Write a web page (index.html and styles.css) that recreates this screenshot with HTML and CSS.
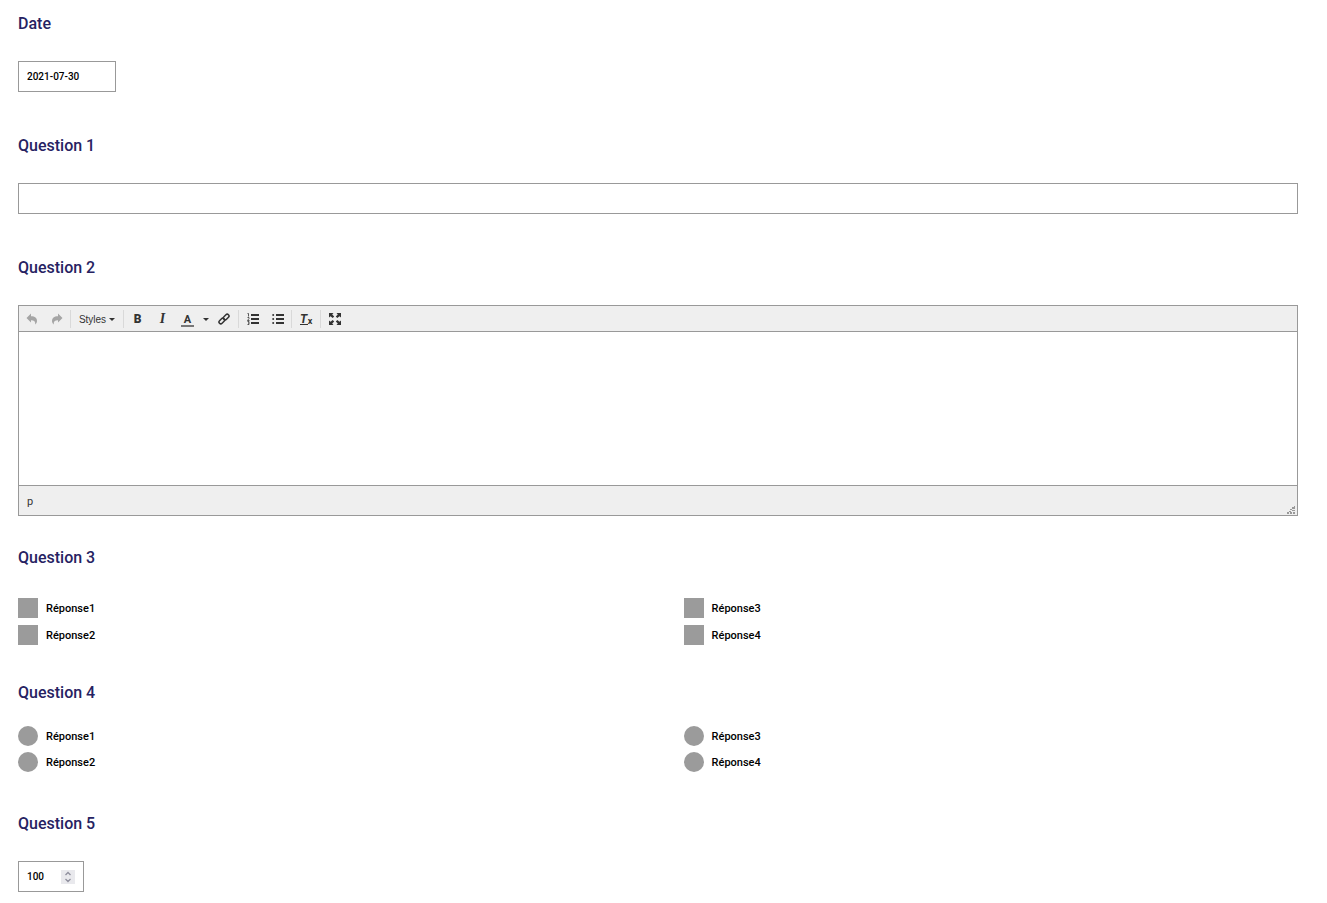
FILE: index.html
```html
<!DOCTYPE html>
<html lang="fr">
<head>
  <meta charset="UTF-8">
  <meta name="viewport" content="width=device-width, initial-scale=1.0">
  <title>Questionnaire</title>
  <link rel="stylesheet" href="styles.css">
</head>
<body>

  <form class="survey">
    <div class="question">
      <label class="title" for="date">Date</label>
      <input class="field field-date" type="text" id="date" value="2021-07-30">
    </div>

    <div class="question">
      <label class="title" for="q1">Question 1</label>
      <input class="field" type="text" id="q1">
    </div>

    <div class="question question-editor">
      <label class="title" for="q2">Question 2</label>
      <div class="editor">
        <div class="toolbar">
          <div class="group">
            <button type="button" class="off" aria-label="Annuler" disabled>
              <svg width="12" height="12" viewBox="0 0 12 12"><path d="M5 .5v2.700c4 0 6 2 6 4.800 0 1.500-.7 2.700-1.800 3.500.5-2.800-1-4.300-4.200-4.300v2.300L.5 5z"/></svg>
            </button>
            <button type="button" class="off" aria-label="Rétablir" disabled>
              <svg width="12" height="12" viewBox="0 0 12 12"><path d="M7 .5v2.700C3 3.200 1 5.200 1 8c0 1.500.7 2.700 1.800 3.500-.5-2.800 1-4.300 4.200-4.300v2.300L11.500 5z"/></svg>
            </button>
          </div>
          <div class="group">
            <button type="button" class="styles">Styles <i class="caret"></i></button>
          </div>
          <div class="group">
            <button type="button" class="bold" aria-label="Gras">B</button>
            <button type="button" class="italic" aria-label="Italique">I</button>
            <button type="button" class="color" aria-label="Couleur du texte"><span>A</span></button>
            <button type="button" class="drop" aria-label="Choisir une couleur"><i class="caret"></i></button>
            <button type="button" aria-label="Lien">
              <svg class="link" width="12" height="12" viewBox="0 0 12 12"><rect x="5" y="2.200" width="6.400" height="3.600" rx="1.800" transform="rotate(-45 8.200 4)"/><rect x=".6" y="6.200" width="6.400" height="3.600" rx="1.800" transform="rotate(-45 3.800 8)"/></svg>
            </button>
          </div>
          <div class="group">
            <button type="button" aria-label="Liste numérotée">
              <svg width="12" height="12" viewBox="0 0 12 12"><path d="M4 1h8v2H4zM4 5h8v2H4zM4 9h8v2H4z"/><path d="M.5 .5h1v3M.5 4.500H2v1L.5 7.500H2.500M.5 8.500H2v3H.5M1 10h1" fill="none" stroke="#333" stroke-width=".8"/></svg>
            </button>
            <button type="button" aria-label="Liste à puces">
              <svg width="12" height="12" viewBox="0 0 12 12"><path d="M4 1h8v2H4zM4 5h8v2H4zM4 9h8v2H4z"/><circle cx="1.200" cy="2" r="1"/><circle cx="1.200" cy="6" r="1"/><circle cx="1.200" cy="10" r="1"/></svg>
            </button>
          </div>
          <div class="group">
            <button type="button" class="clear" aria-label="Effacer la mise en forme"><span>T</span><small>x</small></button>
          </div>
          <div class="group">
            <button type="button" aria-label="Plein écran">
              <svg width="12" height="12" viewBox="0 0 12 12"><path d="M0 0h4.500L3.200 1.500 5.200 3.500 3.700 5 1.500 3.200 0 4.500zM12 0v4.500L10.500 3.200 8.300 5 6.800 3.500 8.800 1.500 7.500 0zM0 12V7.500L1.500 8.800 3.700 7 5.200 8.500 3.200 10.500 4.500 12zM12 12H7.500L8.800 10.500 6.800 8.500 8.300 7 10.500 8.800 12 7.500z"/></svg>
            </button>
          </div>
        </div>
        <textarea class="content" id="q2"></textarea>
        <div class="statusbar">
          <span>p</span>
          <svg class="resize" width="8" height="8" viewBox="0 0 8 8"><path d="M7 0h1v1H7zM5 1h3v2H5zM3 3h2v1H3zM5 4h3v1H5zM2 5h2v1H2zM0 6h2v2H0zM3 6h2v2H3zM6 6h2v2H6z"/></svg>
        </div>
      </div>
    </div>

    <fieldset class="question question-checks">
      <legend class="title">Question 3</legend>
      <div class="answers">
        <label><input type="checkbox" name="q3" value="1">Réponse1</label>
        <label><input type="checkbox" name="q3" value="2">Réponse2</label>
        <label><input type="checkbox" name="q3" value="3">Réponse3</label>
        <label><input type="checkbox" name="q3" value="4">Réponse4</label>
      </div>
    </fieldset>

    <fieldset class="question question-radios">
      <legend class="title">Question 4</legend>
      <div class="answers">
        <label><input type="radio" name="q4" value="1">Réponse1</label>
        <label><input type="radio" name="q4" value="2">Réponse2</label>
        <label><input type="radio" name="q4" value="3">Réponse3</label>
        <label><input type="radio" name="q4" value="4">Réponse4</label>
      </div>
    </fieldset>

    <div class="question">
      <label class="title" for="q5">Question 5</label>
      <div class="field number">
        <input type="number" id="q5" value="100">
        <div class="spinner">
          <button type="button" aria-label="Augmenter" onclick="document.getElementById('q5').stepUp()">
            <svg width="8" height="5" viewBox="0 0 8 5"><path d="M1.500 4L4 1.500 6.500 4"/></svg>
          </button>
          <button type="button" aria-label="Diminuer" onclick="document.getElementById('q5').stepDown()">
            <svg width="8" height="5" viewBox="0 0 8 5"><path d="M1.500 1L4 3.500 6.500 1"/></svg>
          </button>
        </div>
      </div>
    </div>
  </form>

</body>
</html>
```
FILE: styles.css
```css
* {
  box-sizing: border-box;
}

body {
  margin: 0;
  font-family: Roboto, "Liberation Sans", sans-serif;
  font-size: 11px;
  font-weight: 500;
  color: #000;
  background-color: #fff;
}

button, input, textarea {
  font: inherit;
  color: inherit;
}

.survey {
  padding: 14px 29px 11px 18px;
}

.question {
  margin: 0 0 44px;
  padding: 0;
  border: 0;
  min-width: 0;
}

.question:last-child {
  margin-bottom: 0;
}

.question-editor {
  margin-bottom: 32px;
}

.question-checks {
  margin-bottom: 38px;
}

.question-radios {
  margin-bottom: 42px;
}

.title {
  display: block;
  margin-bottom: 27px;
  padding: 0;
  font-size: 16px;
  line-height: 20px;
  color: #262262;
}

/* text fields */
.field {
  display: block;
  width: 100%;
  height: 31px;
  padding: 0 8px;
  border: 1px solid #999;
  border-radius: 0;
  background-color: #fff;
  font-size: 10px;
}

.field-date {
  width: 98px;
}

.number {
  display: flex;
  align-items: center;
  justify-content: space-between;
  width: 66px;
}

.number input {
  width: 32px;
  padding: 0;
  border: 0;
  outline: 0;
  -moz-appearance: textfield;
  appearance: textfield;
}

.number input::-webkit-inner-spin-button {
  display: none;
}

.spinner {
  display: flex;
  flex-direction: column;
  background-color: #e9e9ed;
}

.spinner button {
  display: flex;
  align-items: center;
  justify-content: center;
  width: 14px;
  height: 7px;
  padding: 0;
  border: 0;
  background: none;
}

.spinner path {
  fill: none;
  stroke: #8f8f9d;
  stroke-width: 1.3;
}

/* rich text editor */
.editor {
  border: 1px solid #999;
  color: #333;
}

.toolbar {
  display: flex;
  align-items: center;
  height: 26px;
  padding-top: 1px;
  border-bottom: 1px solid #999;
  background-color: #efefef;
}

.group {
  display: flex;
  height: 18px;
  padding: 0 1px;
  border-left: 1px solid #d9d9d9;
}

.group:first-child {
  padding-left: 0;
  border-left: 0;
}

.toolbar button {
  display: flex;
  align-items: center;
  justify-content: center;
  width: 25px;
  padding: 0;
  border: 0;
  background: none;
}

.toolbar svg {
  fill: #333;
}

.toolbar .off svg {
  fill: #a5a5a5;
}

.toolbar .link {
  fill: none;
  stroke: #333;
  stroke-width: 1.5;
}

.caret {
  border: 3px solid transparent;
  border-top-color: #333;
  border-bottom: 0;
}

.toolbar .styles {
  gap: 3px;
  width: 50px;
  font: 10px "Liberation Sans", Arial, sans-serif;
}

.toolbar .drop {
  width: 11px;
}

.toolbar .bold {
  font-size: 12px;
  font-weight: 900;
}

.toolbar .italic {
  font: italic bold 14px "Liberation Serif", serif;
}

.color span {
  width: 13px;
  padding-top: 2px;
  border-bottom: 2px solid #777;
  font-size: 11px;
  font-weight: 700;
  line-height: 11px;
}

.toolbar .color + .drop + button {
  width: 26px;
}

.toolbar .clear {
  width: 26px;
}

.clear span {
  width: 8px;
  border-bottom: 1px solid #333;
  font-size: 12px;
  font-style: italic;
  font-weight: 700;
  line-height: 10px;
}

.clear small {
  align-self: flex-end;
  padding-bottom: 2px;
  font-size: 9px;
  font-weight: 700;
  line-height: 10px;
}

.content {
  display: block;
  width: 100%;
  height: 153px;
  padding: 8px;
  border: 0;
  outline: 0;
  resize: none;
}

.statusbar {
  display: flex;
  align-items: center;
  justify-content: space-between;
  height: 30px;
  padding: 1px 2px 0 8px;
  border-top: 1px solid #999;
  background-color: #efefef;
  font-weight: 400;
}

.resize {
  align-self: flex-end;
  margin-bottom: 1px;
  fill: #999;
}

/* answers run down the first column, then the second */
.answers {
  display: grid;
  grid-template-columns: 52% 1fr;
  grid-template-rows: auto auto;
  grid-auto-flow: column;
  row-gap: 7px;
}

.question-checks .title {
  margin-bottom: 30px;
}

.question-radios .title {
  margin-bottom: 23px;
}

.question-radios .answers {
  row-gap: 6px;
}

.answers label {
  display: flex;
  align-items: center;
  gap: 8px;
}

.answers input {
  appearance: none;
  width: 20px;
  height: 20px;
  margin: 0;
  background-color: #9b9b9b;
}

.answers input[type="radio"] {
  border-radius: 50%;
}

.answers input:checked {
  background-color: #262262;
}
```
